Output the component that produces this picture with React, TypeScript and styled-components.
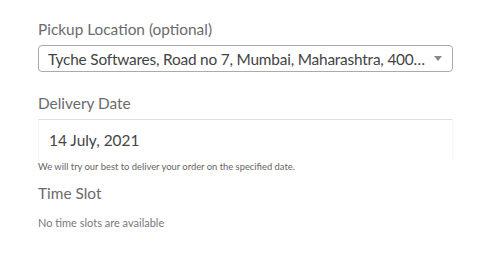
import React from 'react'
import styled, { createGlobalStyle } from 'styled-components'

const GlobalStyle = createGlobalStyle`
  body {
    margin: 0;
    background: #fff;
    font-family: Lato, "Noto Sans", sans-serif;
  }
`

const Form = styled.div`
  width: 415px;
  padding: 18px 0 0 38px;
`

const Field = styled.div<{ gap?: number }>`
  display: flex;
  flex-direction: column;
  margin-bottom: ${(p) => p.gap ?? 0}px;
`

const Label = styled.label`
  font-size: 15.4px;
  line-height: 22px;
  color: #6b6b6b;
`

const Select = styled.div`
  display: flex;
  align-items: center;
  height: 25px;
  margin-top: 5px;
  padding: 0 10px 0 9px;
  border: 1px solid #aaa;
  border-radius: 4px;
  color: #444;
  font-size: 15.4px;
`

const SelectText = styled.span`
  flex: 1;
  white-space: nowrap;
  overflow: hidden;
  text-overflow: ellipsis;
  letter-spacing: -0.2px;
`

const Caret = styled.span`
  width: 0;
  height: 0;
  margin-left: 8px;
  border-left: 4px solid transparent;
  border-right: 4px solid transparent;
  border-top: 5px solid #888;
`

const DateBox = styled.div`
  margin-top: 5px;
  height: 40px;
  padding: 0 10px;
  display: flex;
  align-items: center;
  border: 1px solid #f7f7f7;
  border-top: 1px solid #dedede;
  border-bottom: none;
  color: #444;
  font-size: 15.4px;
`

const Help = styled.p`
  margin: 1px 0 0;
  font-size: 9.4px;
  color: #666;
`

const Note = styled.p`
  margin: 12px 0 0;
  font-size: 11px;
  color: #777;
`

const App = () => {
  return (
    <>
      <GlobalStyle />
      <Form>
        <Field gap={20}>
          <Label>Pickup Location (optional)</Label>
          <Select>
            <SelectText>Tyche Softwares, Road no 7, Mumbai, Maharashtra, 400001</SelectText>
            <Caret />
          </Select>
        </Field>
        <Field gap={10}>
          <Label>Delivery Date</Label>
          <DateBox>14 July, 2021</DateBox>
          <Help>We will try our best to deliver your order on the specified date.</Help>
        </Field>
        <Field>
          <Label>Time Slot</Label>
          <Note>No time slots are available</Note>
        </Field>
      </Form>
    </>
  )
}

export default App
